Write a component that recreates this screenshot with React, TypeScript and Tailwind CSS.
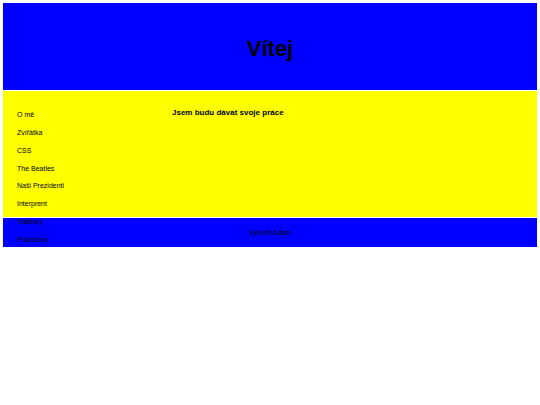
const links = [
  'O mě',
  'Zvířátka',
  'CSS',
  'The Beatles',
  'Naši Prezidenti',
  'Interprent',
  'Traktory',
  'Prázdniny',
]

export default function App() {
  return (
    <div className="m-[3px] font-['Liberation_Sans',Arial,sans-serif] text-black">
      <header className="flex h-[87px] items-center justify-center bg-[#0000ff] pt-[4px]">
        <h1 className="text-[22px] font-bold leading-none">Vítej</h1>
      </header>
      <div className="mt-px flex h-[126px] bg-[#ffff00]">
        <ul className="w-[155px] shrink-0 pl-[14px] pt-[15px]">
          {links.map((l) => (
            <li key={l} className="flex h-[17.75px] items-center text-[7px] leading-none">
              {l}
            </li>
          ))}
        </ul>
        <div className="pl-[14px] pt-[17px]">
          <h2 className="text-[8px] font-bold leading-[10px]">Jsem budu dávat svoje práce</h2>
        </div>
      </div>
      <footer className="mt-px flex h-[29px] items-center justify-center bg-[#0000ff] pt-px text-[7px]">
        Vytvořil Adam
      </footer>
    </div>
  )
}
